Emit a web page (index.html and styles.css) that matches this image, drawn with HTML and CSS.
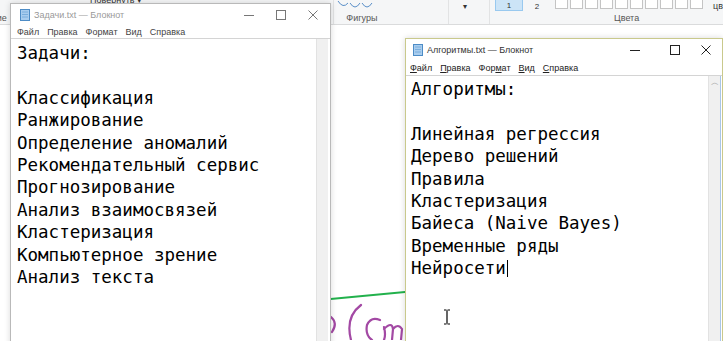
FILE: index.html
```html
<!DOCTYPE html>
<html lang="ru">
<head>
  <meta charset="UTF-8" />
  <title>Блокнот</title>
  <link rel="stylesheet" href="styles.css">
</head>
<body>
  <div class="paint">
    <!-- Paint ribbon (partly hidden behind the notepad windows) -->
    <div class="ribbon">
      <div class="group g-image">
        <div class="tools"><span class="rotate">Повернуть ▾</span></div>
        <div class="label">Изображение</div>
      </div>
      <div class="group g-shapes">
        <div class="tools">
          <svg width="50" height="10" viewBox="0 0 50 10">
            <path d="M2 0 q5 8 10 2 M14 2 q5 8 10 0 M26 2 q5 8 10 0" fill="none" stroke="#5a8fc8" stroke-width="1"/>
          </svg>
        </div>
        <div class="label">Фигуры</div>
      </div>
      <div class="group g-size">
        <div class="tools"><span class="arrow">▾</span></div>
        <div class="label">&nbsp;</div>
      </div>
      <div class="group g-colors">
        <div class="tools">
          <span class="color-slot active">1</span>
          <span class="color-slot">2</span>
          <span class="swatches">
            <i></i><i></i><i></i><i></i><i></i><i></i><i></i><i></i><i></i><i></i>
          </span>
          <span class="more">цв</span>
        </div>
        <div class="label">Цвета</div>
      </div>
    </div>

    <div class="workspace">
      <svg class="drawing" width="723" height="315" viewBox="0 26 723 315">
        <path d="M320 301 L405 293" stroke="#22b14c" stroke-width="2" fill="none"/>
        <g fill="none" stroke="#a349a4" stroke-width="2.2" stroke-linecap="round">
          <path d="M331 318 Q338 324 332 333"/>
          <path d="M361 306 Q345 318 351 341"/>
          <path d="M380 321 Q371 317 367 326 Q365 336 372 341"/>
          <path d="M384 328 Q386 336 384 341 M384 330 Q392 322 393 330 L392 341 M393 330 Q398 324 402 330 L401 341"/>
        </g>
      </svg>
    </div>

    <!-- Window 1 -->
    <div class="notepad np-tasks">
      <div class="titlebar">
        <svg class="app-icon" width="12" height="13" viewBox="0 0 12 13">
          <rect x="1.5" y="1.5" width="9" height="11" fill="#a9cdee" stroke="#4d8cc6"/>
          <path d="M3 4h6M3 6.5h6M3 9h6" stroke="#6fa6d8" stroke-width="0.8"/>
        </svg>
        <span class="title">Задачи.txt — Блокнот</span>
        <div class="controls">
          <svg width="12" height="12" viewBox="0 0 12 12"><path d="M1 6.5h10" stroke="#777"/></svg>
          <svg width="12" height="12" viewBox="0 0 12 12"><rect x="1.5" y="1.5" width="9" height="9" fill="none" stroke="#777"/></svg>
          <svg width="12" height="12" viewBox="0 0 12 12"><path d="M1.5 1.5l9 9M10.5 1.5l-9 9" stroke="#777"/></svg>
        </div>
      </div>
      <div class="menubar">
        <span>Файл</span><span>Правка</span><span>Формат</span><span>Вид</span><span>Справка</span>
      </div>
      <div class="editor">
        <pre class="text">Задачи:

Классификация
Ранжирование
Определение аномалий
Рекомендательный сервис
Прогнозирование
Анализ взаимосвязей
Кластеризация
Компьютерное зрение
Анализ текста</pre>
        <div class="scrollbar"></div>
      </div>
    </div>

    <!-- Window 2 (active) -->
    <div class="notepad np-algo active">
      <div class="titlebar">
        <svg class="app-icon" width="12" height="13" viewBox="0 0 12 13">
          <rect x="1.5" y="1.5" width="9" height="11" fill="#a9cdee" stroke="#4d8cc6"/>
          <path d="M3 4h6M3 6.5h6M3 9h6" stroke="#6fa6d8" stroke-width="0.8"/>
        </svg>
        <span class="title">Алгоритмы.txt — Блокнот</span>
        <div class="controls">
          <svg class="btn-min" width="12" height="12" viewBox="0 0 12 12"><path d="M1 6.5h10" stroke="#222"/></svg>
          <svg width="12" height="12" viewBox="0 0 12 12"><rect x="1.5" y="1.5" width="9" height="9" fill="none" stroke="#222"/></svg>
          <svg width="12" height="12" viewBox="0 0 12 12"><path d="M1.5 1.5l9 9M10.5 1.5l-9 9" stroke="#222"/></svg>
        </div>
      </div>
      <div class="menubar">
        <span><u>Ф</u>айл</span><span><u>П</u>равка</span><span>Фор<u>м</u>ат</span><span><u>В</u>ид</span><span><u>С</u>правка</span>
      </div>
      <div class="editor">
        <pre class="text">Алгоритмы:

Линейная регрессия
Дерево решений
Правила
Кластеризация
Байеса (Naive Bayes)
Временные ряды
Нейросети<span class="caret"></span></pre>
        <svg class="ibeam" width="8" height="16" viewBox="0 0 8 16">
          <path d="M1 1h2.5M4.5 1H7M4 1.5v13M1 15h2.5M4.5 15H7" stroke="#000" stroke-width="1.2" fill="none"/>
        </svg>
        <div class="scrollbar"><span class="up">︿</span></div>
      </div>
    </div>
  </div>
</body>
</html>
```

FILE: styles.css
```css
html, body {
  margin: 0;
  padding: 0;
}
body {
  width: 723px;
  height: 341px;
  overflow: hidden;
  font-family: "Liberation Sans", Arial, sans-serif;
  background: #fff;
}
.paint {
  position: relative;
  width: 723px;
  height: 341px;
  overflow: hidden;
  background: #f0f0f0;
}

/* ribbon */
.ribbon {
  display: flex;
  height: 25px;
  background: #f5f6f7;
  border-bottom: 1px solid #dadbdc;
  box-sizing: border-box;
  overflow: hidden;
}
.group {
  display: flex;
  flex-direction: column;
  border-right: 1px solid #e2e3e4;
  box-sizing: border-box;
}
.group .tools {
  height: 11px;
  display: flex;
  align-items: flex-end;
  overflow: hidden;
  font-size: 9px;
  color: #333;
}
.group .label {
  flex: 1;
  display: flex;
  align-items: center;
  justify-content: center;
  font-size: 9px;
  color: #555;
  white-space: nowrap;
}
.g-image {
  width: 390px;
  margin-left: -50px;
}
.g-image .tools {
  height: 4px;
  margin-bottom: 7px;
}
.g-image .label {
  justify-content: flex-start;
  padding-left: 0;
}
.rotate {
  margin-left: 140px;
  line-height: 8px;
}
.g-shapes {
  width: 116px;
}
.g-shapes .tools {
  padding-left: 2px;
}
.g-shapes .label {
  justify-content: flex-start;
  padding-left: 12px;
}
.g-size {
  width: 42px;
}
.g-size .tools {
  justify-content: center;
  padding-right: 8px;
}
.arrow {
  font-size: 8px;
  line-height: 9px;
}
.g-colors {
  flex: 1;
  border-right: none;
}
.g-colors .tools {
  padding-left: 5px;
  align-items: stretch;
}
.g-colors .label {
  justify-content: flex-start;
  padding-left: 124px;
}
.color-slot {
  width: 28px;
  display: flex;
  align-items: flex-end;
  justify-content: center;
  font-size: 8px;
  color: #333;
  line-height: 9px;
}
.color-slot.active {
  background: #cce4f7;
  border: 1px solid #99c9ef;
  border-top: none;
  box-sizing: border-box;
}
.swatches {
  display: flex;
  gap: 2px;
  margin-left: 4px;
}
.swatches i {
  width: 13px;
  height: 9px;
  background: #fff;
  border: 1px solid #c4c4c4;
  border-top: none;
  box-sizing: border-box;
}
.more {
  margin-left: 10px;
  font-size: 9px;
  color: #333;
  align-self: flex-end;
  line-height: 10px;
}

/* paint canvas */
.workspace {
  height: 316px;
  background: #fff;
}
.drawing {
  display: block;
}

/* notepad windows */
.notepad {
  position: absolute;
  display: flex;
  flex-direction: column;
  background: #fff;
  border: 1px solid #b9b9b9;
  box-shadow: 0 0 6px rgba(0, 0, 0, 0.15);
  box-sizing: border-box;
}
.np-tasks {
  left: 10px;
  top: 3px;
  width: 321px;
  height: 350px;
}
.np-algo {
  left: 405px;
  top: 38px;
  width: 318px;
  height: 320px;
  border-color: #c9c98c;
}
.titlebar {
  display: flex;
  align-items: center;
  height: 21px;
  padding-left: 8px;
  flex-shrink: 0;
}
.np-algo .titlebar {
  padding-left: 6px;
}
.app-icon {
  flex-shrink: 0;
}
.title {
  margin-left: 3px;
  font-size: 9px;
  color: #9a9a9a;
  white-space: nowrap;
}
.np-algo .title {
  color: #333;
}
.controls {
  margin-left: auto;
  display: flex;
  gap: 20px;
  padding-right: 11px;
}
.np-algo .controls {
  gap: 19px;
  padding-right: 10px;
}
.np-algo .btn-min {
  margin-right: 9px;
}
.menubar {
  display: flex;
  gap: 8px;
  height: 13px;
  padding-left: 6px;
  align-items: center;
  font-size: 9px;
  color: #444;
  flex-shrink: 0;
}
.np-algo .menubar {
  height: 15px;
  padding-left: 4px;
  gap: 8px;
  color: #222;
}
.menubar u {
  text-decoration-thickness: 1px;
  text-underline-offset: 1px;
}
.editor {
  position: relative;
  flex: 1;
  display: flex;
  border-top: 1px solid #d4d4d4;
}
.text {
  flex: 1;
  margin: 0;
  padding: 3px 0 0 6px;
  font-family: "DejaVu Sans Mono", monospace;
  font-size: 17.5px;
  line-height: 22.4px;
  color: #000;
}
.np-algo .text {
  padding-left: 5px;
  padding-top: 2px;
}
.caret {
  display: inline-block;
  width: 1px;
  height: 17px;
  margin-left: 1px;
  background: #000;
  vertical-align: -3px;
}
.scrollbar {
  width: 11px;
  background: #f0f0f0;
  border-left: 1px solid #e2e2e2;
  display: flex;
  justify-content: center;
}
.np-tasks .scrollbar {
  margin-right: 2px;
}
.np-algo .scrollbar {
  margin-right: 1px;
  border-right: 1px solid #a9c6e8;
}
.up {
  font-size: 8px;
  color: #a0a0a0;
  line-height: 14px;
}
.ibeam {
  position: absolute;
  left: 37px;
  top: 233px;
}
```
